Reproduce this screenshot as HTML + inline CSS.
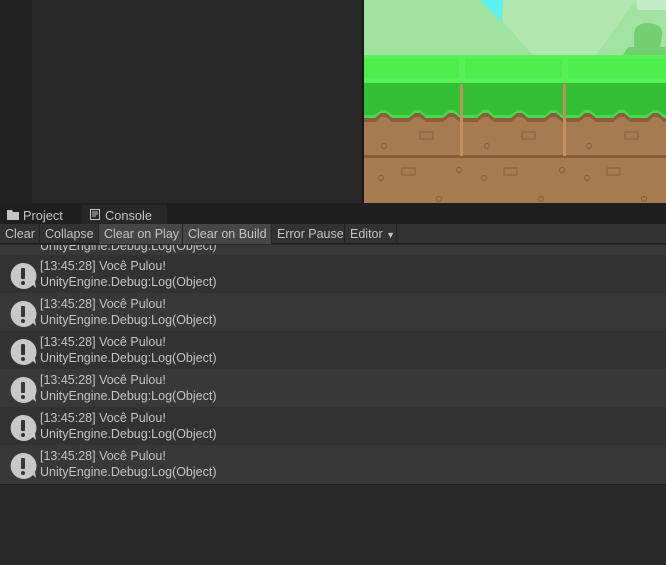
<!DOCTYPE html>
<html><head><style>
*{margin:0;padding:0;box-sizing:border-box}
body{width:666px;height:565px;background:#282828;position:relative;overflow:hidden;font-family:"Liberation Sans",sans-serif;font-size:12.5px;color:#c4c4c4}
.a{position:absolute}
.row{position:absolute;left:0;width:666px;height:38px}
.row .t{position:absolute;left:40px;top:4px;line-height:15.5px;white-space:nowrap}
.ic{position:absolute;left:9px;top:7px}
.btn{position:absolute;top:224px;height:20px;line-height:20px;padding-left:5px;border-right:1px solid #232323;white-space:nowrap;overflow:hidden}
</style></head><body>
<div class="a" style="left:0;top:0;width:32px;height:203px;background:#212121"></div>
<div class="a" style="left:32px;top:0;width:330px;height:203px;background:#282828"></div>
<div class="a" style="left:362px;top:0;width:2px;height:203px;background:#191919"></div>
<svg class="a" style="left:364px;top:0" width="302" height="203" viewBox="364 0 302 203">
<rect x="364" y="0" width="302" height="55" fill="#a0e2a0"/>
<polygon points="503,0 636,0 596,55 533,55 503,22" fill="#b1e6b1"/>
<polygon points="480,0 503,0 501,22" fill="#5cf2f2"/>
<polygon points="636,0 666,0 666,10 637,10" fill="#c2ecc2"/>
<polygon points="596,55 637,10 666,10 666,55" fill="#a2e2a2"/>
<path d="M623,55 L628,47 L634,47 L634,33 Q636,23 648,23 Q664,24 662,36 L660,47 L666,47 L666,55Z" fill="#72cf72"/>
<rect x="364" y="110" width="302" height="93" fill="#a67b50"/>
<rect x="364" y="55" width="302" height="28" fill="#57f057"/>
<rect x="364" y="59" width="302" height="19" fill="#4eed4e"/>
<rect x="459" y="59" width="6" height="19" fill="#57f057"/><rect x="562" y="59" width="6" height="19" fill="#57f057"/>
<path d="M364,83 H670 V118 l-6,0 -6,-5 -5,0 -6,5 -11,0 l-6,0 -6,-5 -5,0 -6,5 -11,0 l-6,0 -6,-5 -5,0 -6,5 -11,0 l-6,0 -6,-5 -5,0 -6,5 -11,0 l-6,0 -6,-5 -5,0 -6,5 -11,0 l-6,0 -6,-5 -5,0 -6,5 -11,0 l-6,0 -6,-5 -5,0 -6,5 -11,0 l-6,0 -6,-5 -5,0 -6,5 -11,0 l-6,0 -6,-5 -5,0 -6,5 -11,0 H360 V83 Z" fill="#8a5e3a" transform="translate(0,4)"/>
<path d="M364,83 H670 V118 l-6,0 -6,-5 -5,0 -6,5 -11,0 l-6,0 -6,-5 -5,0 -6,5 -11,0 l-6,0 -6,-5 -5,0 -6,5 -11,0 l-6,0 -6,-5 -5,0 -6,5 -11,0 l-6,0 -6,-5 -5,0 -6,5 -11,0 l-6,0 -6,-5 -5,0 -6,5 -11,0 l-6,0 -6,-5 -5,0 -6,5 -11,0 l-6,0 -6,-5 -5,0 -6,5 -11,0 l-6,0 -6,-5 -5,0 -6,5 -11,0 H360 V83 Z" fill="#4bd64b"/>
<path d="M364,83 H670 V115 l-6,0 -6,-5 -5,0 -6,5 -11,0 l-6,0 -6,-5 -5,0 -6,5 -11,0 l-6,0 -6,-5 -5,0 -6,5 -11,0 l-6,0 -6,-5 -5,0 -6,5 -11,0 l-6,0 -6,-5 -5,0 -6,5 -11,0 l-6,0 -6,-5 -5,0 -6,5 -11,0 l-6,0 -6,-5 -5,0 -6,5 -11,0 l-6,0 -6,-5 -5,0 -6,5 -11,0 l-6,0 -6,-5 -5,0 -6,5 -11,0 H360 V83 Z" fill="#33bf33"/>
<rect x="364" y="155" width="302" height="3" fill="#8a5e3a"/>
<rect x="460" y="84" width="3" height="72" fill="#c0905f"/><rect x="563" y="84" width="3" height="72" fill="#c0905f"/>
<g fill="none" stroke="#8a5e3a" stroke-width="1"><rect x="420" y="132" width="13" height="7"/><rect x="522" y="132" width="13" height="7"/><rect x="625" y="132" width="13" height="7"/><rect x="402" y="168" width="13" height="7"/><rect x="504" y="168" width="13" height="7"/><rect x="607" y="168" width="13" height="7"/><circle cx="384" cy="146" r="2.5"/><circle cx="487" cy="146" r="2.5"/><circle cx="589" cy="146" r="2.5"/><circle cx="381" cy="178" r="2.5"/><circle cx="484" cy="178" r="2.5"/><circle cx="587" cy="178" r="2.5"/><circle cx="459" cy="170" r="2.5"/><circle cx="562" cy="170" r="2.5"/><circle cx="439" cy="199" r="2.5"/><circle cx="541" cy="199" r="2.5"/><circle cx="644" cy="199" r="2.5"/></g>
</svg>
<div class="a" style="left:0;top:203px;width:666px;height:21px;background:#1f1f1f"></div>
<div class="a" style="left:82px;top:205px;width:85px;height:19px;background:#282828"></div>
<svg class="a" style="left:7px;top:210px" width="12" height="10"><path d="M0,0h5l1,2h6v8h-12z" fill="#c4c4c4"/></svg>
<div class="a" style="left:23px;top:207px;line-height:17px;font-size:12.8px">Project</div>
<svg class="a" style="left:90px;top:209px" width="10" height="11"><rect x="0.5" y="0.5" width="9" height="10" fill="none" stroke="#c4c4c4"/><path d="M2,3h6M2,5h6M2,7h4" stroke="#c4c4c4"/></svg>
<div class="a" style="left:105px;top:207px;line-height:17px;font-size:12.8px">Console</div>
<div class="a" style="left:0;top:224px;width:666px;height:20px;background:#323232;border-bottom:1px solid #1f1f1f"></div>
<div class="btn" style="left:0;width:40px">Clear</div>
<div class="btn" style="left:40px;width:59px">Collapse</div>
<div class="btn" style="left:99px;width:84px;background:#464646">Clear on Play</div>
<div class="btn" style="left:183px;width:89px;background:#464646">Clear on Build</div>
<div class="btn" style="left:272px;width:73px">Error Pause</div>
<div class="btn" style="left:345px;width:52px">Editor <span style="font-size:9px">▼</span></div>
<div class="row" style="top:245px;height:10px;background:#383838;overflow:hidden"><div class="t" style="top:-6px">UnityEngine.Debug:Log(Object)</div></div>
<div class="row" style="top:255px;background:#323232"><svg class="ic" width="28" height="28"><path d="M14,1a13,13 0 1 0 10,22l3,3l-1,-6a13,13 0 0 0 -12,-19z" fill="#c8c8c8"/><rect x="12" y="6" width="4" height="11" rx="1" fill="#323232"/><circle cx="14" cy="21" r="2" fill="#323232"/></svg><div class="t">[13:45:28] Você Pulou!<br>UnityEngine.Debug:Log(Object)</div></div>
<div class="row" style="top:293px;background:#383838"><svg class="ic" width="28" height="28"><path d="M14,1a13,13 0 1 0 10,22l3,3l-1,-6a13,13 0 0 0 -12,-19z" fill="#c8c8c8"/><rect x="12" y="6" width="4" height="11" rx="1" fill="#383838"/><circle cx="14" cy="21" r="2" fill="#383838"/></svg><div class="t">[13:45:28] Você Pulou!<br>UnityEngine.Debug:Log(Object)</div></div>
<div class="row" style="top:331px;background:#323232"><svg class="ic" width="28" height="28"><path d="M14,1a13,13 0 1 0 10,22l3,3l-1,-6a13,13 0 0 0 -12,-19z" fill="#c8c8c8"/><rect x="12" y="6" width="4" height="11" rx="1" fill="#323232"/><circle cx="14" cy="21" r="2" fill="#323232"/></svg><div class="t">[13:45:28] Você Pulou!<br>UnityEngine.Debug:Log(Object)</div></div>
<div class="row" style="top:369px;background:#383838"><svg class="ic" width="28" height="28"><path d="M14,1a13,13 0 1 0 10,22l3,3l-1,-6a13,13 0 0 0 -12,-19z" fill="#c8c8c8"/><rect x="12" y="6" width="4" height="11" rx="1" fill="#383838"/><circle cx="14" cy="21" r="2" fill="#383838"/></svg><div class="t">[13:45:28] Você Pulou!<br>UnityEngine.Debug:Log(Object)</div></div>
<div class="row" style="top:407px;background:#323232"><svg class="ic" width="28" height="28"><path d="M14,1a13,13 0 1 0 10,22l3,3l-1,-6a13,13 0 0 0 -12,-19z" fill="#c8c8c8"/><rect x="12" y="6" width="4" height="11" rx="1" fill="#323232"/><circle cx="14" cy="21" r="2" fill="#323232"/></svg><div class="t">[13:45:28] Você Pulou!<br>UnityEngine.Debug:Log(Object)</div></div>
<div class="row" style="top:445px;height:40px;background:#383838;border-bottom:1px solid #202020"><svg class="ic" width="28" height="28"><path d="M14,1a13,13 0 1 0 10,22l3,3l-1,-6a13,13 0 0 0 -12,-19z" fill="#c8c8c8"/><rect x="12" y="6" width="4" height="11" rx="1" fill="#383838"/><circle cx="14" cy="21" r="2" fill="#383838"/></svg><div class="t">[13:45:28] Você Pulou!<br>UnityEngine.Debug:Log(Object)</div></div>
</body></html>
